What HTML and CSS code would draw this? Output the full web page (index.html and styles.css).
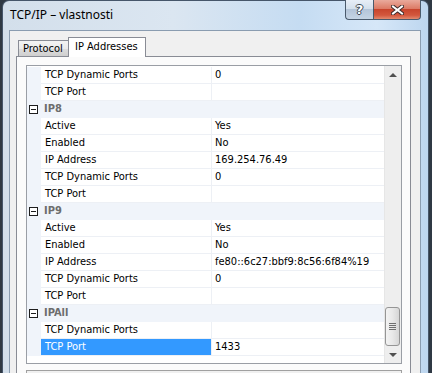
FILE: index.html
```html
<!DOCTYPE html>
<html lang="cs">
<head>
  <meta charset="UTF-8" />
  <title>TCP/IP – vlastnosti</title>
  <link rel="stylesheet" href="styles.css">
</head>
<body>

<div class="window">
  <div class="titlebar">
    <span class="title">TCP/IP – vlastnosti</span>
    <div class="caption-btns">
      <div class="cap-btn help">?</div>
      <div class="cap-btn close">
        <svg width="13" height="10" viewBox="0 0 13 10">
          <path d="M2 1.5 L11 8.5 M11 1.5 L2 8.5" stroke="#3b2a2a" stroke-width="4" stroke-linecap="square"/>
          <path d="M2 1.5 L11 8.5 M11 1.5 L2 8.5" stroke="#fff" stroke-width="2" stroke-linecap="square"/>
        </svg>
      </div>
    </div>
  </div>

  <div class="client">
    <div class="tabs">
      <div class="tab">Protocol</div>
      <div class="tab active">IP Addresses</div>
    </div>

    <div class="tab-panel">
      <div class="grid">
        <div class="rows">
          <div class="row"><span class="gutter"></span><span class="name">TCP Dynamic Ports</span><span class="value">0</span></div>
          <div class="row"><span class="gutter"></span><span class="name">TCP Port</span><span class="value"></span></div>
          <div class="category"><span class="gutter"><span class="minus"></span></span><span class="cat-name">IP8</span></div>
          <div class="row"><span class="gutter"></span><span class="name">Active</span><span class="value">Yes</span></div>
          <div class="row"><span class="gutter"></span><span class="name">Enabled</span><span class="value">No</span></div>
          <div class="row"><span class="gutter"></span><span class="name">IP Address</span><span class="value">169.254.76.49</span></div>
          <div class="row"><span class="gutter"></span><span class="name">TCP Dynamic Ports</span><span class="value">0</span></div>
          <div class="row"><span class="gutter"></span><span class="name">TCP Port</span><span class="value"></span></div>
          <div class="category"><span class="gutter"><span class="minus"></span></span><span class="cat-name">IP9</span></div>
          <div class="row"><span class="gutter"></span><span class="name">Active</span><span class="value">Yes</span></div>
          <div class="row"><span class="gutter"></span><span class="name">Enabled</span><span class="value">No</span></div>
          <div class="row"><span class="gutter"></span><span class="name">IP Address</span><span class="value">fe80::6c27:bbf9:8c56:6f84%19</span></div>
          <div class="row"><span class="gutter"></span><span class="name">TCP Dynamic Ports</span><span class="value">0</span></div>
          <div class="row"><span class="gutter"></span><span class="name">TCP Port</span><span class="value"></span></div>
          <div class="category"><span class="gutter"><span class="minus"></span></span><span class="cat-name">IPAll</span></div>
          <div class="row"><span class="gutter"></span><span class="name">TCP Dynamic Ports</span><span class="value"></span></div>
          <div class="row selected"><span class="gutter"></span><span class="name">TCP Port</span><span class="value">1433</span></div>
        </div>

        <div class="scrollbar">
          <div class="sb-arrow"><span class="tri up"></span></div>
          <div class="sb-track"></div>
          <div class="sb-thumb"><span class="grip"></span></div>
          <div class="sb-arrow"><span class="tri down"></span></div>
        </div>
      </div>

      <div class="desc"></div>
    </div>
  </div>
</div>

</body>
</html>
```

FILE: styles.css
```css
* {
  box-sizing: border-box;
}

body {
  margin: 0;
  padding: 0;
  height: 100vh;
  overflow: hidden;
  background-color: #2f3944;
  font-family: "DejaVu Sans Condensed", "DejaVu Sans", sans-serif;
  font-size: 11px;
  color: #000;
}

.window {
  margin-left: 2px;
  width: 427px;
  height: 373px;
  border: 1px solid #46566a;
  border-bottom: none;
  border-radius: 7px 7px 0 0;
  padding: 0 7px 0 6px;
  background: linear-gradient(to right, #d3dfeb 0%, #dbe6f1 40%, #c5dcf2 70%, #d6e7f8 88%, #bdd6ef 100%);
}

.titlebar {
  height: 29px;
  display: flex;
  align-items: flex-start;
}

.title {
  font-family: "Noto Sans", sans-serif;
  font-size: 12px;
  color: #000;
  margin: 6px 0 0 1px;
  line-height: 16px;
}

.caption-btns {
  margin-left: auto;
  margin-top: -1px;
  display: flex;
}

.cap-btn {
  height: 20px;
  border: 1px solid #4a5a6c;
  border-top: none;
  display: flex;
  align-items: center;
  justify-content: center;
}

.help {
  width: 28px;
  border-right: none;
  border-radius: 0 0 0 4px;
  background: linear-gradient(to bottom, #e7eef7 0%, #d4e0ec 45%, #b4c5d9 50%, #c5d4e4 100%);
  color: #fff;
  font-family: "DejaVu Sans", sans-serif;
  font-weight: bold;
  font-size: 13px;
  text-shadow: 1px 0 #3c4754, -1px 0 #3c4754, 0 1px #3c4754, 0 -1px #3c4754;
}

.close {
  width: 48px;
  border-radius: 0 0 4px 0;
  background: linear-gradient(to bottom, #e9aa9c 0%, #dc7b66 45%, #c8452d 50%, #d3573d 80%, #e28a6f 100%);
}

.client {
  height: 344px;
  border: 1px solid #8a9cb0;
  border-bottom: none;
  background-color: #f0f0f0;
  padding: 6px 0 0 6px;
}

.tabs {
  display: flex;
  align-items: flex-end;
  padding-left: 2px;
  height: 19px;
}

.tab {
  height: 16px;
  width: 50px;
  border: 1px solid #898c95;
  border-bottom: none;
  border-right: none;
  padding-left: 4px;
  line-height: 15px;
  background: linear-gradient(to bottom, #f3f3f3 0%, #ebebeb 50%, #dddddd 51%, #cfcfcf 100%);
}

.tab.active {
  position: relative;
  z-index: 1;
  width: 78px;
  height: 20px;
  margin-bottom: -1px;
  border-right: 1px solid #898c95;
  padding-left: 6px;
  line-height: 17px;
  background: #fff;
}

.tab-panel {
  width: 395px;
  height: 318px;
  border: 1px solid #898c95;
  border-bottom: none;
  background-color: #fbfbfb;
  padding: 8px 0 0 9px;
}

.grid {
  width: 376px;
  height: 299px;
  border: 1px solid #9a9ea5;
  background-color: #fff;
  display: flex;
}

.rows {
  flex: 1;
  padding-top: 1px;
}

.row {
  display: grid;
  grid-template-columns: 14px 171px 1fr;
  height: 17px;
}

.gutter {
  background-color: #f0f4fa;
  height: 17px;
}

.name,
.value {
  border-bottom: 1px solid #edf0f5;
  line-height: 16px;
  white-space: nowrap;
  overflow: hidden;
}

.name {
  padding-left: 4px;
  border-right: 1px solid #edf0f5;
}

.value {
  padding-left: 3px;
}

.selected .name {
  background-color: #3399ff;
  color: #fff;
}

.category {
  display: flex;
  height: 17px;
  background-color: #f0f4fa;
}

.category .gutter {
  width: 14px;
  padding: 4px 0 0 2px;
}

.minus {
  display: block;
  width: 9px;
  height: 9px;
  border: 1px solid #1e1e1e;
  background: linear-gradient(#1e1e1e, #1e1e1e) no-repeat center / 5px 1px, #fff;
}

.cat-name {
  padding-left: 3px;
  line-height: 16px;
  font-weight: bold;
  color: #6d6d6d;
}

.scrollbar {
  width: 17px;
  display: flex;
  flex-direction: column;
  background-color: #eeeeee;
  border-left: 1px solid #e6e6e6;
}

.sb-arrow {
  height: 17px;
  display: flex;
  align-items: center;
  justify-content: center;
}

.tri {
  width: 0;
  height: 0;
  border-left: 4px solid transparent;
  border-right: 4px solid transparent;
}

.tri.up {
  border-bottom: 4px solid #505050;
}

.tri.down {
  border-top: 4px solid #505050;
}

.sb-track {
  flex: 1;
}

.sb-thumb {
  height: 39px;
  margin: 0 1px 0 0;
  border: 1px solid #959595;
  border-radius: 3px;
  background: linear-gradient(to right, #f3f3f3 0%, #e8e8e8 50%, #d6d6d6 100%);
  display: flex;
  align-items: center;
  justify-content: center;
}

.grip {
  width: 7px;
  height: 7px;
  background: repeating-linear-gradient(to bottom, #707070 0 1px, transparent 1px 2px);
}

.desc {
  margin-top: 6px;
  width: 376px;
  height: 3px;
  border: 1px solid #a0a0a0;
  border-bottom: none;
  background-color: #f0f0f0;
}
```
